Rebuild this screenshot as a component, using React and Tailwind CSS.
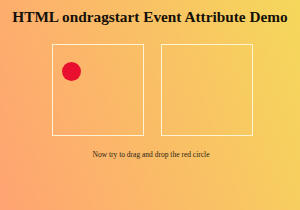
export default function App() {
  return (
    <div className="w-[300px] h-[210px] overflow-hidden bg-[linear-gradient(70deg,#ffa372,#f5d85b)] flex flex-col items-center" style={{ fontFamily: '"Liberation Serif", serif' }}>
      <h1 className="mt-[8px] text-[15.3px] leading-[18px] font-bold text-[#151008]">HTML ondragstart Event Attribute Demo</h1>
      <div className="mt-[18px] flex gap-[17px] ml-[4px]">
        <div className="w-[92px] h-[92px] border border-[#fff3d6] pt-[17px] pl-[9px]">
          <div className="w-[19px] h-[19px] rounded-full bg-[#e8102e]"></div>
        </div>
        <div className="w-[92px] h-[92px] border border-[#fff3d6]"></div>
      </div>
      <p className="mt-[14px] text-[7.5px] leading-[10px] text-[#2a1f10] ml-[2px]">Now try to drag and drop the red circle</p>
    </div>
  );
}
